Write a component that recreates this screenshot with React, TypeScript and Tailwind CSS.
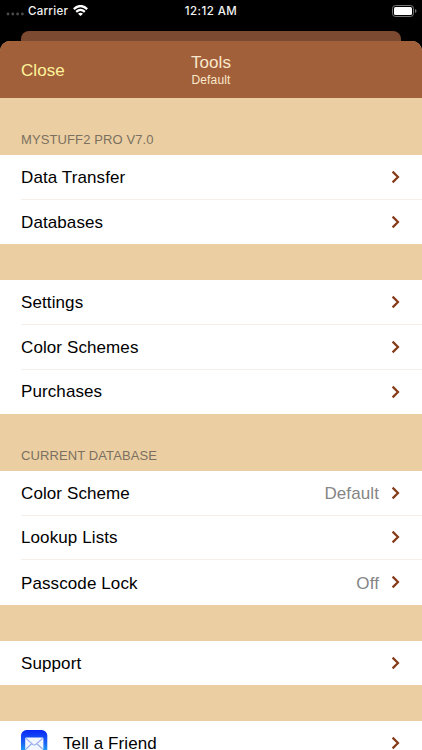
type Item = { label: string; height: string; value?: string; mail?: boolean; nudge?: string };

function Chevron() {
  return (
    <svg className="mb-px mr-[22px] block h-[14px] w-[9px] shrink-0" viewBox="0 0 9 14" fill="none">
      <path d="M1.6 1.6 7 7 1.6 12.4" stroke="#853a18" strokeWidth="2.2" />
    </svg>
  );
}

function MailIcon() {
  return (
    <svg className="mr-[15px] h-[27px] w-[27px] shrink-0" viewBox="0 0 27 27" fill="none">
      <defs>
        <linearGradient id="mail" x1="0" y1="0" x2="0" y2="1">
          <stop offset="0" stopColor="#0926f5" />
          <stop offset="0.5" stopColor="#1c66f4" />
          <stop offset="1" stopColor="#20c8fa" />
        </linearGradient>
      </defs>
      <rect x="0" y="0" width="26.3" height="26.3" rx="5.6" fill="url(#mail)" />
      <rect x="4.2" y="7.5" width="18.2" height="12.4" rx="1.2" fill="#f1f6ff" />
      <path
        d="m5 8.3 6.7 6.1q1.6 1.3 3.2 0l6.7-6.1M5 19.2l5.7-5.6m10.9 5.6-5.7-5.6"
        stroke="#8fa4ee"
        strokeWidth="1.1"
      />
    </svg>
  );
}

function Group({ items }: { items: Item[] }) {
  return (
    <section className="bg-white pl-[21px]">
      {items.map((item, i) => (
        <div
          key={item.label}
          className={`flex items-center ${item.height} ${i < items.length - 1 ? "border-b border-[#f7efe7]" : ""}`}
        >
          {item.mail && <MailIcon />}
          <span className={`relative grow whitespace-nowrap text-[17px] leading-5 tracking-[0.1px] text-black ${item.nudge ?? "top-px"}`}>
            {item.label}
          </span>
          {item.value && (
            <span className="relative top-px mr-[12px] text-[17px] leading-5 tracking-[0.1px] text-[#858585]">{item.value}</span>
          )}
          <Chevron />
        </div>
      ))}
    </section>
  );
}

function Heading({ children }: { children: string }) {
  return (
    <h2 className="flex h-[57px] items-end pb-[7px] pl-[21px] text-[13px] leading-4 tracking-[0.11px] text-[#7b6f61]">
      {children}
    </h2>
  );
}

function StatusBar() {
  return (
    <div className="grid h-[21px] grid-cols-3 items-center font-['Inter','Liberation_Sans',sans-serif] text-[11.5px] font-medium leading-[21px] text-[#f2f2f2]">
      <div className="flex items-center pl-[6px]">
        <svg className="mr-[4px] mt-[7px] h-[4px] w-[18px]" viewBox="0 0 18 4" fill="#4b4b4b">
          <circle cx="2" cy="2" r="1.4" />
          <circle cx="6.8" cy="2" r="1.4" />
          <circle cx="11.6" cy="2" r="1.4" />
          <circle cx="16.4" cy="2" r="1.4" />
        </svg>
        <span className="relative top-px tracking-[0.27px]">Carrier</span>
        <svg className="ml-[5px] h-[11px] w-[15px]" viewBox="0 0 15 11" fill="none" stroke="#fff" strokeWidth="2.3">
          <path d="M.8 4.1Q7.5-2 14.2 4.1M3.2 6.8q4.3-3.8 8.6 0" />
          <path d="m5 8.7q2.5-2.1 5 0L7.5 11Z" fill="#fff" stroke="none" />
        </svg>
      </div>
      <span className="relative top-px whitespace-nowrap text-center tracking-[0.45px]">12:12 AM</span>
      <svg className="mr-[5px] h-[12px] w-[25px] justify-self-end" viewBox="0 0 25 12" fill="none">
        <rect x="0.5" y="0.5" width="21" height="11" rx="3" stroke="#777" />
        <rect x="2" y="2" width="18" height="8" rx="1.5" fill="#fff" />
        <path d="M23 4q1.5.5 1.5 2T23 8Z" fill="#777" />
      </svg>
    </div>
  );
}

export default function App() {
  return (
    <main className="flex h-[750px] w-[422px] flex-col overflow-hidden bg-black font-['Liberation_Sans',Arial,sans-serif]">
      <StatusBar />
      <div className="mx-[21px] mt-[10px] h-[10px] shrink-0 rounded-t-[8px] bg-[#7c4a30]" />
      <div className="grow bg-[linear-gradient(to_right,#000_21px,#7c4a30_21px,#7c4a30_401px,#000_401px)]">
        <div className="overflow-hidden rounded-t-[10px] bg-[#ebcfa2]">
          <header className="grid h-[57px] grid-cols-3 items-center bg-[#a1603a]">
            <button className="relative top-px pl-[21px] text-left text-[17px] leading-5 tracking-[0.07px] text-[#fff29b]">Close</button>
            <div className="pt-[2px] text-center text-[#fbe8cc]">
              <h1 className="text-[17px] leading-[18px] tracking-[0.07px]">Tools</h1>
              <p className="text-[12px] leading-4 tracking-[0.15px]">Default</p>
            </div>
          </header>
          <Heading>MYSTUFF2 PRO V7.0</Heading>
          <Group
            items={[
              { label: "Data Transfer", height: "h-[45px]" },
              { label: "Databases", height: "h-[44px]" },
            ]}
          />
          <div className="h-[36px]" />
          <Group
            items={[
              { label: "Settings", height: "h-[45px]" },
              { label: "Color Schemes", height: "h-[45px]" },
              { label: "Purchases", height: "h-[44px]", nudge: "top-0" },
            ]}
          />
          <Heading>CURRENT DATABASE</Heading>
          <Group
            items={[
              { label: "Color Scheme", height: "h-[45px]", value: "Default" },
              { label: "Lookup Lists", height: "h-[44px]", nudge: "top-[0.4px]" },
              { label: "Passcode Lock", height: "h-[45px]", value: "Off" },
            ]}
          />
          <div className="h-[36px]" />
          <Group items={[{ label: "Support", height: "h-[44px]" }]} />
          <div className="h-[36px]" />
          <Group items={[{ label: "Tell a Friend", height: "h-[44px]", mail: true }]} />
        </div>
      </div>
    </main>
  );
}
